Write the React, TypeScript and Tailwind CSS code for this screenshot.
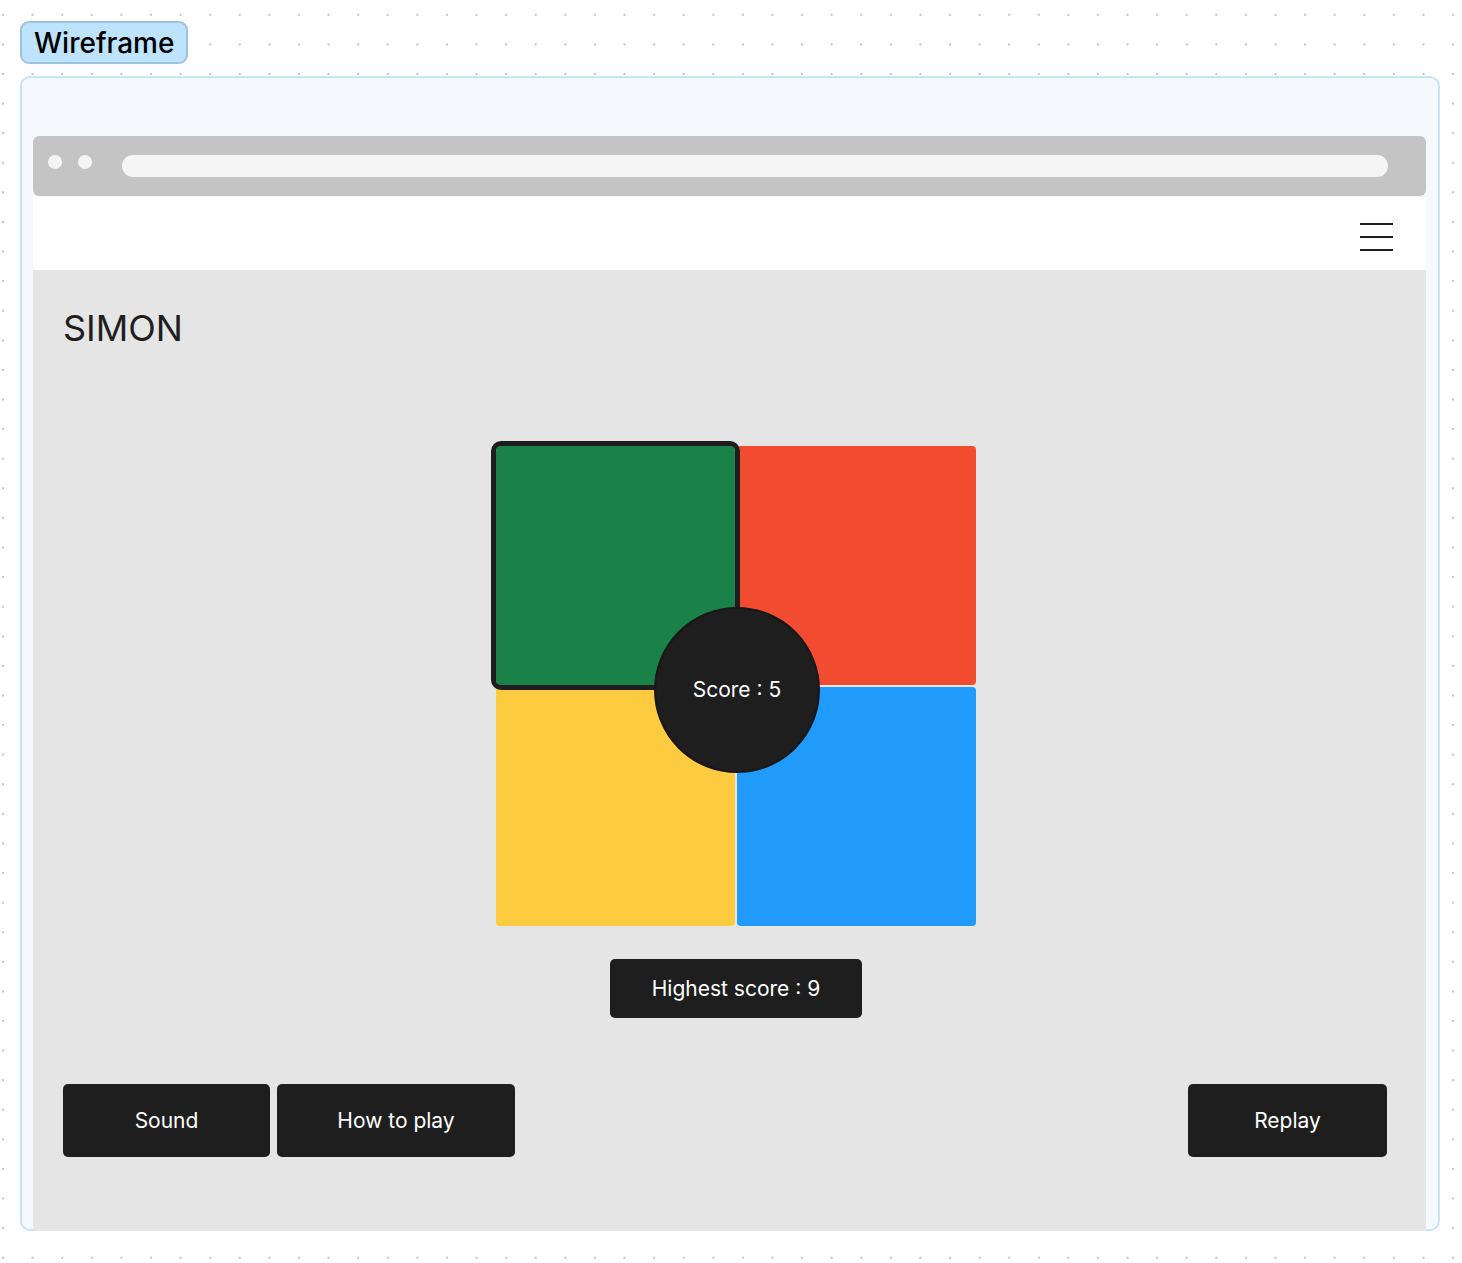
const font = { fontFamily: "Inter, 'Noto Sans', sans-serif" };

const BrowserBar = () => (
  <div className="flex h-[60px] items-center rounded-[6px] bg-[#c4c4c4] pl-[15px] pr-[38px]">
    <div className="-mt-[8px] flex gap-[16px]">
      <span className="h-[14px] w-[14px] rounded-full bg-[#f4f4f4]" />
      <span className="h-[14px] w-[14px] rounded-full bg-[#f4f4f4]" />
    </div>
    <div className="ml-[30px] h-[22px] flex-1 rounded-full bg-[#f5f5f5]" />
  </div>
);

const NavBar = () => (
  <div className="mt-px flex h-[73px] justify-end rounded-b-[5px] bg-white pr-[33px] pt-[26px]">
    <div className="flex w-[33px] flex-col gap-[11px]">
      <span className="h-[2px] bg-[#1e1e1e]" />
      <span className="h-[2px] bg-[#1e1e1e]" />
      <span className="h-[2px] bg-[#1e1e1e]" />
    </div>
  </div>
);

const Board = () => (
  <div className="relative grid grid-cols-[239px_239px] grid-rows-[239px_239px] gap-[2px]">
    <div className="relative z-10 rounded-[5px] bg-[#1a8249] outline-[5px] outline-solid outline-[#1e1e1e]" />
    <div className="rounded-[4px] bg-[#f14b30]" />
    <div className="rounded-[4px] bg-[#fccb3f]" />
    <div className="rounded-[4px] bg-[#219bfb]" />
    <div className="absolute left-[158px] top-[161px] z-20 flex h-[166px] w-[166px] items-center justify-center rounded-full border-2 border-[#171717] bg-[#1e1e1e]">
      <span className="text-[21px] text-white">Score : 5</span>
    </div>
  </div>
);

const Btn = ({ label, w }: { label: string; w: string }) => (
  <button className={`flex h-[73px] ${w} items-center justify-center rounded-[5px] bg-[#1e1e1e] text-[21px] text-white`}>
    {label}
  </button>
);

const App = () => {
  return (
    <div
      style={font}
      className="min-h-[1263px] w-full bg-white bg-[radial-gradient(circle,#c6c6c6_1px,transparent_1.6px)] bg-[size:29.6px_29.6px] bg-[position:17.8px_0px] px-[20px] pt-[21px]"
    >
      <div className="inline-flex h-[43px] items-center rounded-[9px] border-2 border-[#9cc2df] bg-[#bee3fc] px-[12px] text-[28px] font-medium text-black">
        Wireframe
      </div>
      <div className="mt-[12px] flex h-[1155px] w-[1420px] flex-col rounded-[10px] border-2 border-[#c5e3fb] bg-[#f5f9fe] pl-[11px] pr-[12px] pt-[58px]">
        <BrowserBar />
        <NavBar />
        <div className="-mb-[2px] flex flex-1 flex-col bg-[#e5e5e5] pl-[30px] pr-[39px] pt-[40px]">
          <h1 className="text-[36px] font-normal leading-[36px] text-[#1e1e1e]">SIMON</h1>
          <div className="mt-[100px] flex flex-col items-center pl-[22px]">
            <Board />
            <div className="mt-[33px] flex h-[59px] w-[252px] items-center justify-center rounded-[5px] bg-[#1e1e1e] text-[21px] text-white">
              Highest score : 9
            </div>
          </div>
          <div className="mt-[66px] flex items-center">
            <Btn label="Sound" w="w-[207px]" />
            <div className="ml-[7px]">
              <Btn label="How to play" w="w-[238px]" />
            </div>
            <div className="ml-auto">
              <Btn label="Replay" w="w-[199px]" />
            </div>
          </div>
        </div>
      </div>
    </div>
  );
};

export default App;
